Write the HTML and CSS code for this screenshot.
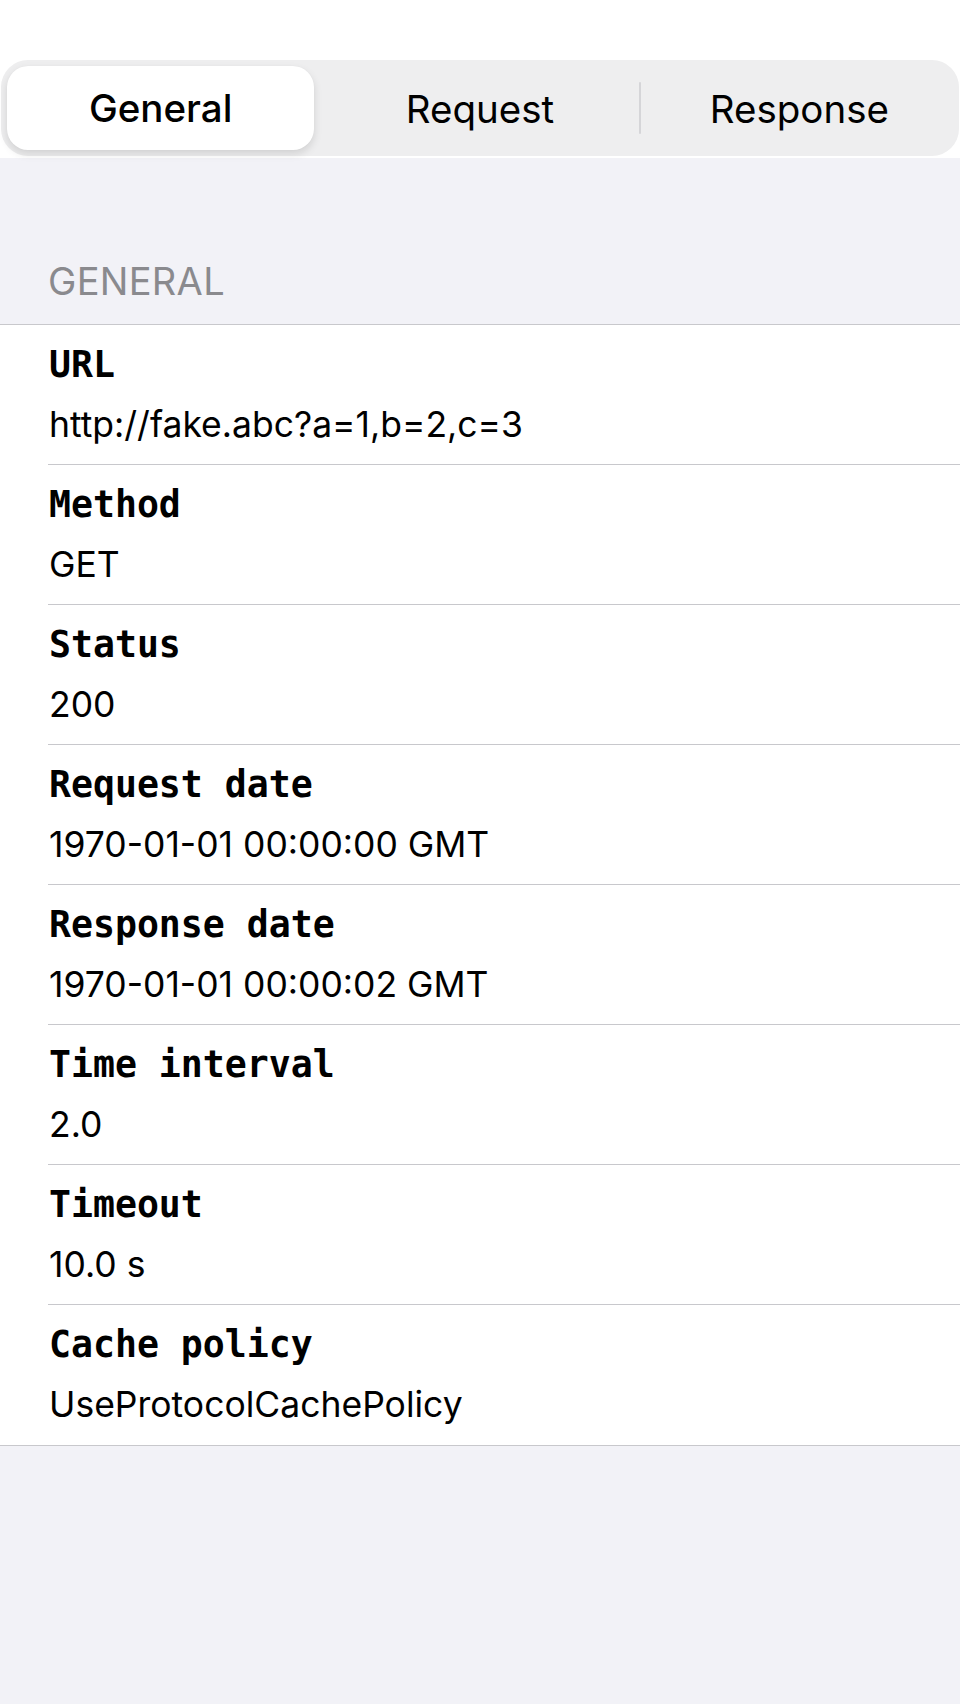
FILE: index.html
```html
<!DOCTYPE html>
<html lang="en">
<head>
<meta charset="utf-8">
<title>General</title>
<link rel="stylesheet" href="styles.css">
</head>
<body>
<div class="topbar">
  <div class="segmented">
    <div class="segment selected"><span>General</span></div>
    <div class="segment"><span>Request</span></div>
    <div class="segment divider"><span>Response</span></div>
  </div>
</div>
<div class="section-header">GENERAL</div>
<div class="list">
  <div class="row"><div class="label">URL</div><div class="value">http://fake.abc?a=1,b=2,c=3</div></div>
  <div class="row"><div class="label">Method</div><div class="value">GET</div></div>
  <div class="row"><div class="label">Status</div><div class="value">200</div></div>
  <div class="row"><div class="label">Request date</div><div class="value">1970-01-01 00:00:00 GMT</div></div>
  <div class="row"><div class="label">Response date</div><div class="value">1970-01-01 00:00:02 GMT</div></div>
  <div class="row"><div class="label">Time interval</div><div class="value">2.0</div></div>
  <div class="row"><div class="label">Timeout</div><div class="value">10.0 s</div></div>
  <div class="row"><div class="label">Cache policy</div><div class="value">UseProtocolCachePolicy</div></div>
</div>
</body>
</html>
```

FILE: styles.css
```css
html, body {
  margin: 0;
  padding: 0;
}
body {
  background: #f2f2f7;
  font-family: Inter, "Noto Sans", sans-serif;
  color: #000;
  min-height: 1704px;
}
.topbar {
  background: #fff;
  height: 158px;
  padding-top: 60px;
  box-sizing: border-box;
}
.segmented {
  margin: 0 1px;
  height: 96px;
  background: #eeeeef;
  border-radius: 27px;
  display: grid;
  grid-template-columns: 1fr 1fr 1fr;
}
.segment {
  position: relative;
  display: flex;
  align-items: center;
  justify-content: center;
  font-size: 38.5px;
  font-weight: 400;
  padding-top: 2px;
  box-sizing: border-box;
}
.segment.selected {
  margin: 6px;
  background: #fff;
  border-radius: 21px;
  box-shadow: 0 4px 9px rgba(0, 0, 0, 0.12), 0 0 1px rgba(0, 0, 0, 0.06);
  font-weight: 500;
  padding-top: 0;
}
.segment.divider::before {
  content: "";
  position: absolute;
  left: -1px;
  top: 22px;
  bottom: 22px;
  width: 2px;
  background: #d5d5d8;
  border-radius: 1px;
}
.section-header {
  padding: 100px 0 20px 48px;
  font-size: 38px;
  line-height: 46px;
  color: #8a8a8e;
  letter-spacing: 0.3px;
}
.list {
  background: #fff;
  border-top: 1px solid #c8c8cc;
  border-bottom: 1px solid #c8c8cc;
}
.row {
  margin-left: 48px;
  padding: 18px 0 17px 1px;
  border-bottom: 1px solid #c8c8cc;
}
.row:last-child {
  border-bottom: none;
  padding-bottom: 18px;
}
.label {
  font-family: "DejaVu Sans Mono", "Liberation Mono", monospace;
  font-weight: bold;
  font-size: 36.5px;
  line-height: 44px;
  height: 44px;
}
.value {
  margin-top: 16px;
  font-size: 35.5px;
  line-height: 44px;
  height: 44px;
}
```
